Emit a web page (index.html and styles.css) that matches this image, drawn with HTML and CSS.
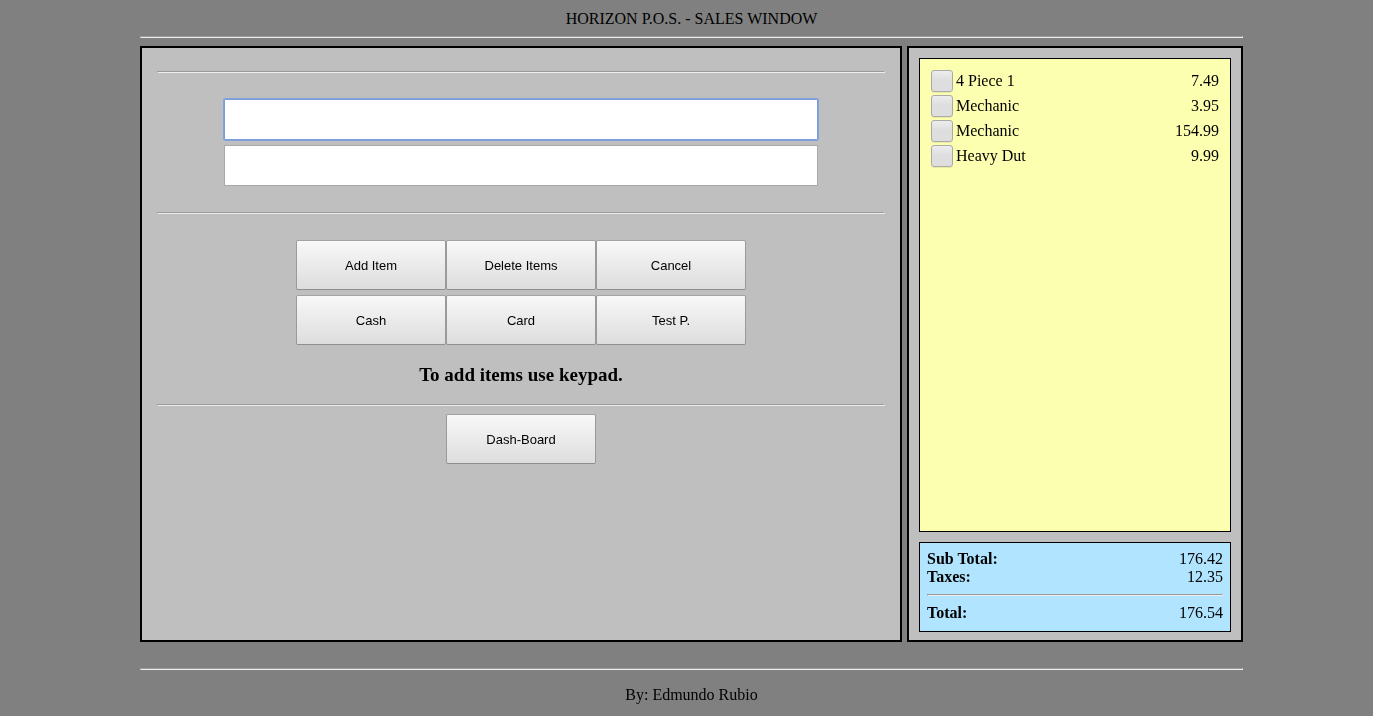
FILE: index.html
```html
<!DOCTYPE html>
<html lang="en">
<head>
<meta charset="utf-8">
<title>Horizon P.O.S. - Sales Window</title>
<link rel="stylesheet" href="styles.css">
</head>
<body>
<div class="page">
  <header class="page-header">HORIZON P.O.S. - SALES WINDOW</header>
  <hr class="rule">
  <main class="panels">
    <section class="panel register">
      <hr class="rule">
      <form class="entry" id="entry">
        <input class="field" type="text" name="item" aria-label="Item code" autocomplete="off" autofocus>
        <input class="field" type="text" name="amount" aria-label="Amount" autocomplete="off">
      </form>
      <hr class="rule">
      <div class="keys">
        <button class="key" type="button">Add Item</button>
        <button class="key" type="button">Delete Items</button>
        <button class="key" type="button">Cancel</button>
        <button class="key" type="button">Cash</button>
        <button class="key" type="button">Card</button>
        <button class="key" type="button">Test P.</button>
      </div>
      <h3 class="hint">To add items use keypad.</h3>
      <hr class="rule">
      <div class="nav">
        <button class="key" type="button">Dash-Board</button>
      </div>
    </section>
    <aside class="panel receipt">
      <div class="items">
        <table class="item-table">
          <tbody>
            <tr><td><label class="item"><input class="tick" type="checkbox">4 Piece 1</label></td><td class="price">7.49</td></tr>
            <tr><td><label class="item"><input class="tick" type="checkbox">Mechanic</label></td><td class="price">3.95</td></tr>
            <tr><td><label class="item"><input class="tick" type="checkbox">Mechanic</label></td><td class="price">154.99</td></tr>
            <tr><td><label class="item"><input class="tick" type="checkbox">Heavy Dut</label></td><td class="price">9.99</td></tr>
          </tbody>
        </table>
      </div>
      <div class="totals">
        <div class="total-row"><b>Sub Total:</b><span>176.42</span></div>
        <div class="total-row"><b>Taxes:</b><span>12.35</span></div>
        <hr class="rule">
        <div class="total-row"><b>Total:</b><span>176.54</span></div>
      </div>
    </aside>
  </main>
  <footer class="page-footer">
    <hr class="rule">
    <p class="credit">By: Edmundo Rubio</p>
  </footer>
</div>
</body>
</html>
```

FILE: styles.css
```css
* {
  box-sizing: border-box;
}

body {
  margin: 0;
  padding-left: 10px;
  background: #808080;
  color: #000;
  font: 16px/18px "Liberation Serif", "Times New Roman", serif;
}

.page {
  display: flex;
  flex-direction: column;
  max-width: 1103px;
  min-height: 100vh;
  margin: 0 auto;
}

.page-header {
  padding: 10px 0 8px;
  text-align: center;
}

.rule {
  width: 100%;
  height: 2px;
  margin: 0;
  border: 1px solid;
  border-color: #9a9a9a #eee #eee #9a9a9a;
}

.panels {
  display: grid;
  flex: 1;
  grid-template-columns: minmax(0, 762fr) minmax(0, 336fr);
  gap: 5px;
  margin-top: 8px;
}

.panel {
  border: 2px solid #000;
  background: #bfbfbf;
}

.register {
  padding: 23px 15px;
}

.entry {
  display: flex;
  flex-direction: column;
  gap: 5px;
  padding: 26px 67px;
}

.field {
  width: 100%;
  height: 41px;
  padding: 0 8px;
  border: 1px solid #a9a9a9;
  border-radius: 0;
  background: #fff;
  font: 16px/18px "Liberation Serif", "Times New Roman", serif;
}

.field:focus {
  border-color: #7a9cdb;
  border-radius: 1px;
  outline: 1px solid #83a3de;
  caret-color: transparent;
}

.keys {
  display: grid;
  grid-template-columns: repeat(3, 150px);
  justify-content: center;
  gap: 5px 0;
  padding-top: 26px;
}

.key {
  width: 150px;
  height: 50px;
  padding: 0;
  border: 1px solid;
  border-color: #a2a2a2 #9a9a9a #8f8f8f;
  border-radius: 2px;
  background: linear-gradient(#f8f8f8, #ddd);
  color: #000;
  font: 13px/15px "Liberation Sans", Arial, sans-serif;
}

.hint {
  margin: 20px 0 19px;
  font-size: 19px;
  line-height: 20px;
  text-align: center;
}

.nav {
  display: flex;
  justify-content: center;
  padding-top: 8px;
}

.receipt {
  display: flex;
  flex-direction: column;
  gap: 10px;
  padding: 10px 10px 8px;
}

.items {
  flex: 1;
  padding: 9px 11px;
  border: 1px solid #000;
  background: #fdffb0;
}

.item-table {
  width: 100%;
  border-collapse: collapse;
}

.item-table td {
  height: 25px;
  padding: 0;
}

.item {
  display: flex;
  align-items: center;
  gap: 3px;
}

.price {
  text-align: right;
}

.tick {
  width: 22px;
  height: 22px;
  margin: 0;
  appearance: none;
  border: 1px solid #aaa;
  border-radius: 3px;
  background: linear-gradient(#ededed, #dedede 45%, #dedede);
  box-shadow: 0 1px 0 rgba(0, 0, 0, 0.08);
}

.tick:checked {
  background: #8aa9e0;
}

.totals {
  padding: 7px 7px 9px;
  border: 1px solid #000;
  background: #b0e4ff;
}

.total-row {
  display: flex;
  justify-content: space-between;
}

.totals .rule {
  margin: 8px 0;
}

.page-footer {
  padding-top: 26px;
}

.credit {
  margin: 16px 0 12px;
  text-align: center;
}
```
